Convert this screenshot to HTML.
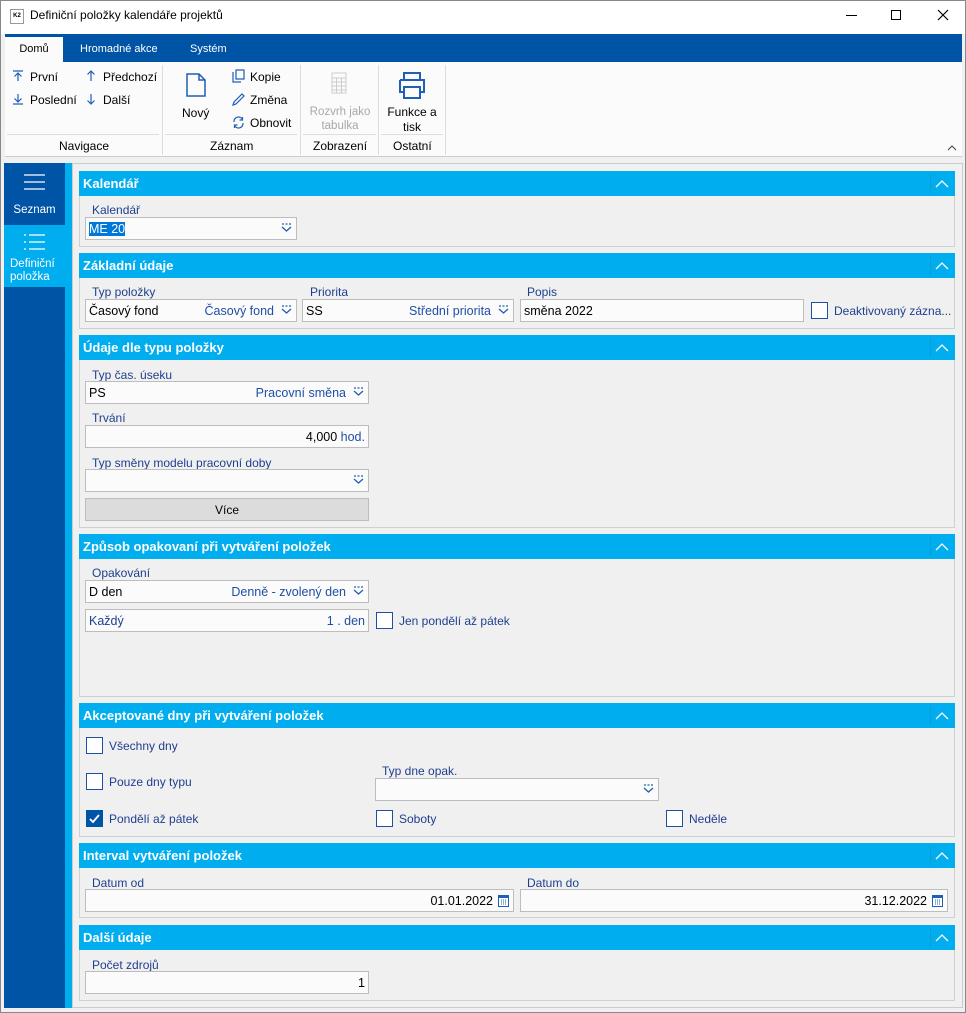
<!DOCTYPE html>
<html><head><meta charset="utf-8"><style>
*{box-sizing:border-box;margin:0;padding:0}
body{width:966px;height:1013px;position:relative;overflow:hidden;background:#f0f0f0;font-family:"Liberation Sans",sans-serif;font-size:12px;color:#000}
.a{position:absolute}
.hdr{position:absolute;left:79px;width:876px;height:25px;background:#00adef;color:#fff;font-weight:bold;font-size:13px;line-height:26px;padding-left:4px}
.hdr .sep{position:absolute;right:24px;top:3px;width:1px;height:19px;background:#0a9ad6}
.hdr svg{position:absolute;right:6px;top:8px}
.body{position:absolute;left:79px;width:876px;border:1px solid #d0d0d0;border-top:none;background:#f0f0f0}
.lbl{position:absolute;color:#1e3f8f;font-size:12px}
.inp{position:absolute;height:23px;background:#fbfbfb;border:1px solid #bdbdbd;line-height:22px;padding:0 3px;font-size:12.5px}
.r{text-align:right}
.blue{color:#1f4fa5}
.dd{position:absolute;right:4px;top:5px}
.cb{position:absolute;width:17px;height:17px;border:1px solid #1f4fa5;background:#fff}
.cbl{position:absolute;color:#1e3f8f;font-size:12px}
</style></head><body>
<div class="a" style="left:0;top:0;width:966px;height:1013px;border:1px solid #888;background:#f0f0f0"></div>
<div class="a" style="left:1px;top:1px;width:964px;height:33px;background:#fff"></div>
<div class="a" style="left:10px;top:9px;width:14px;height:15px;border:1px solid #999;background:#fff;font-size:6px;font-weight:bold;line-height:13px;text-align:center">K2</div>
<div class="a" style="left:30px;top:8px;font-size:12px">Definiční položky kalendáře projektů</div>
<div class="a" style="left:846px;top:15px;width:11px;height:1px;background:#000"></div>
<div class="a" style="left:891px;top:10px;width:10px;height:10px;border:1px solid #000"></div>
<svg class="a" style="left:937px;top:9px" width="12" height="12"><path d="M1 1L11 11M11 1L1 11" stroke="#000" stroke-width="1.2"/></svg>
<div class="a" style="left:5px;top:34px;width:957px;height:28px;background:#0054a6"></div>
<div class="a" style="left:5px;top:37px;width:58px;height:25px;background:#fbfbfb;font-size:11px;line-height:25px;text-align:center">Domů</div>
<div class="a" style="left:80px;top:43px;color:#fff;font-size:11px">Hromadné akce</div>
<div class="a" style="left:190px;top:43px;color:#fff;font-size:11px">Systém</div>
<div class="a" style="left:5px;top:62px;width:957px;height:95px;background:#fbfbfb;border-bottom:1px solid #ccc"></div>
<div class="a" style="left:7px;top:134px;width:152px;height:1px;background:#ddd"></div>
<div class="a" style="left:165px;top:134px;width:132px;height:1px;background:#ddd"></div>
<div class="a" style="left:303px;top:134px;width:73px;height:1px;background:#ddd"></div>
<div class="a" style="left:381px;top:134px;width:62px;height:1px;background:#ddd"></div>
<div class="a" style="left:162px;top:65px;width:1px;height:90px;background:#ddd"></div>
<div class="a" style="left:300px;top:65px;width:1px;height:90px;background:#ddd"></div>
<div class="a" style="left:378px;top:65px;width:1px;height:90px;background:#ddd"></div>
<div class="a" style="left:445px;top:65px;width:1px;height:90px;background:#ddd"></div>
<svg class="a" style="left:12px;top:70px" width="12" height="12"><path d="M1 1H11M6 3V11M2.5 6.5L6 3L9.5 6.5" stroke="#1f5fb5" fill="none" stroke-width="1.2"/></svg>
<div class="a" style="left:30px;top:70px;font-size:12px">První</div>
<svg class="a" style="left:12px;top:93px" width="12" height="12"><path d="M1 11H11M6 1V9M2.5 5.5L6 9L9.5 5.5" stroke="#1f5fb5" fill="none" stroke-width="1.2"/></svg>
<div class="a" style="left:30px;top:93px;font-size:12px">Poslední</div>
<svg class="a" style="left:85px;top:70px" width="12" height="12"><path d="M6 1V11M2.5 4.5L6 1L9.5 4.5" stroke="#1f5fb5" fill="none" stroke-width="1.2"/></svg>
<div class="a" style="left:103px;top:70px;font-size:12px">Předchozí</div>
<svg class="a" style="left:85px;top:93px" width="12" height="12"><path d="M6 1V11M2.5 7.5L6 11L9.5 7.5" stroke="#1f5fb5" fill="none" stroke-width="1.2"/></svg>
<div class="a" style="left:103px;top:93px;font-size:12px">Další</div>
<div class="a" style="left:59px;top:139px;font-size:12px">Navigace</div>
<svg class="a" style="left:186px;top:73px" width="20" height="24"><path d="M1 1H13L19 7V23H1Z M13 1V7H19" stroke="#1f5fb5" fill="none" stroke-width="1.5"/></svg>
<div class="a" style="left:182px;top:106px;font-size:12px">Nový</div>
<svg class="a" style="left:232px;top:69px" width="13" height="14"><path d="M1 3V13H9M4 1H12V10H4Z" stroke="#1f5fb5" fill="none" stroke-width="1.2"/></svg>
<div class="a" style="left:250px;top:70px;font-size:12px">Kopie</div>
<svg class="a" style="left:232px;top:93px" width="13" height="13"><path d="M1 12L2 9L10 1L12 3L4 11Z" stroke="#1f5fb5" fill="none" stroke-width="1.2"/></svg>
<div class="a" style="left:250px;top:93px;font-size:12px">Změna</div>
<svg class="a" style="left:232px;top:116px" width="13" height="13"><path d="M2 6A4.5 4.5 0 0 1 10.5 3.5M11 7A4.5 4.5 0 0 1 2.5 9.5M10.5 1V4H7.5M2.5 12V9H5.5" stroke="#1f5fb5" fill="none" stroke-width="1.2"/></svg>
<div class="a" style="left:250px;top:116px;font-size:12px">Obnovit</div>
<div class="a" style="left:210px;top:139px;font-size:12px">Záznam</div>
<svg class="a" style="left:331px;top:72px" width="16" height="22"><rect x="1" y="1" width="14" height="20" fill="none" stroke="#ccc"/><path d="M1 6H15M1 10H15M1 14H15M1 18H15M5.5 6V21M10.5 6V21" stroke="#ccc"/></svg>
<div class="a" style="left:309px;top:105px;font-size:11.5px;color:#a8a8a8;text-align:center;width:62px;line-height:14px">Rozvrh jako tabulka</div>
<div class="a" style="left:313px;top:139px;font-size:12px">Zobrazení</div>
<svg class="a" style="left:397px;top:71px" width="30" height="28"><path d="M7 9V2H23V9M3 9H27V21H23M7 21H3V9M7 16H23V27H7Z" stroke="#1f5fb5" fill="none" stroke-width="2"/></svg>
<div class="a" style="left:385px;top:105px;font-size:12px;text-align:center;width:54px;line-height:15px">Funkce a tisk</div>
<div class="a" style="left:393px;top:139px;font-size:12px">Ostatní</div>
<svg class="a" style="left:947px;top:144px" width="10" height="7"><path d="M1 6L5 2L9 6" stroke="#444" fill="none"/></svg>
<div class="a" style="left:4px;top:163px;width:61px;height:845px;background:#0054a6"></div>
<div class="a" style="left:65px;top:163px;width:7px;height:845px;background:#00adef"></div>
<div class="a" style="left:72px;top:163px;width:891px;height:845px;border:1px solid #ccc;background:#f0f0f0"></div>
<svg class="a" style="left:24px;top:174px" width="21" height="16"><path d="M0 1H21M0 8H21M0 15H21" stroke="#fff" stroke-width="1.3"/></svg>
<div class="a" style="left:4px;top:204px;width:61px;text-align:center;color:#fff;font-size:11.5px">Seznam</div>
<div class="a" style="left:4px;top:225px;width:61px;height:62px;background:#00adef"></div>
<svg class="a" style="left:24px;top:234px" width="21" height="16"><path d="M0 1H2M0 8H2M0 15H2M5 1H21M5 8H21M5 15H21" stroke="#fff" stroke-width="1.3"/></svg>
<div class="a" style="left:10px;top:258px;color:#fff;font-size:11.5px;line-height:13px">Definiční<br>položka</div>

<div class="hdr" style="top:171px">Kalendář<div class="sep"></div><svg width="14" height="9"><path d="M1 8L7 2L13 8" stroke="#fff" fill="none" stroke-width="1.3"/></svg></div>
<div class="body" style="top:196px;height:51px"></div>
<div class="lbl" style="left:92px;top:203px">Kalendář</div>
<div class="inp" style="left:85px;top:217px;width:212px"><span style="background:#0078d7;color:#fff">ME 20</span><svg class="dd" width="11" height="10"><path d="M1 1h2M4.5 1h2M8 1h2M1 4L5.5 8L10 4" stroke="#1f5fb5" fill="none" stroke-width="1.3"/></svg></div>

<div class="hdr" style="top:253px">Základní údaje<div class="sep"></div><svg width="14" height="9"><path d="M1 8L7 2L13 8" stroke="#fff" fill="none" stroke-width="1.3"/></svg></div>
<div class="body" style="top:278px;height:51px"></div>
<div class="lbl" style="left:92px;top:285px">Typ položky</div>
<div class="inp" style="left:85px;top:299px;width:212px">Časový fond<span class="blue" style="position:absolute;right:22px">Časový fond</span><svg class="dd" width="11" height="10"><path d="M1 1h2M4.5 1h2M8 1h2M1 4L5.5 8L10 4" stroke="#1f5fb5" fill="none" stroke-width="1.3"/></svg></div>
<div class="lbl" style="left:310px;top:285px">Priorita</div>
<div class="inp" style="left:302px;top:299px;width:212px">SS<span class="blue" style="position:absolute;right:22px">Střední priorita</span><svg class="dd" width="11" height="10"><path d="M1 1h2M4.5 1h2M8 1h2M1 4L5.5 8L10 4" stroke="#1f5fb5" fill="none" stroke-width="1.3"/></svg></div>
<div class="lbl" style="left:527px;top:285px">Popis</div>
<div class="inp" style="left:520px;top:299px;width:284px">směna 2022</div>
<div class="cb" style="left:811px;top:302px"></div>
<div class="cbl" style="left:834px;top:304px">Deaktivovaný zázna...</div>

<div class="hdr" style="top:335px">Údaje dle typu položky<div class="sep"></div><svg width="14" height="9"><path d="M1 8L7 2L13 8" stroke="#fff" fill="none" stroke-width="1.3"/></svg></div>
<div class="body" style="top:360px;height:168px"></div>
<div class="lbl" style="left:92px;top:368px">Typ čas. úseku</div>
<div class="inp" style="left:85px;top:381px;width:284px">PS<span class="blue" style="position:absolute;right:22px">Pracovní směna</span><svg class="dd" width="11" height="10"><path d="M1 1h2M4.5 1h2M8 1h2M1 4L5.5 8L10 4" stroke="#1f5fb5" fill="none" stroke-width="1.3"/></svg></div>
<div class="lbl" style="left:92px;top:411px">Trvání</div>
<div class="inp r" style="left:85px;top:425px;width:284px">4,000 <span class="blue">hod.</span></div>
<div class="lbl" style="left:92px;top:456px">Typ směny modelu pracovní doby</div>
<div class="inp" style="left:85px;top:469px;width:284px"><svg class="dd" width="11" height="10"><path d="M1 1h2M4.5 1h2M8 1h2M1 4L5.5 8L10 4" stroke="#1f5fb5" fill="none" stroke-width="1.3"/></svg></div>
<div class="a" style="left:85px;top:498px;width:284px;height:23px;background:#dcdcdc;border:1px solid #bdbdbd;text-align:center;line-height:22px">Více</div>

<div class="hdr" style="top:534px">Způsob opakovaní při vytváření položek<div class="sep"></div><svg width="14" height="9"><path d="M1 8L7 2L13 8" stroke="#fff" fill="none" stroke-width="1.3"/></svg></div>
<div class="body" style="top:559px;height:138px"></div>
<div class="lbl" style="left:92px;top:566px">Opakování</div>
<div class="inp" style="left:85px;top:580px;width:284px">D den<span class="blue" style="position:absolute;right:22px">Denně - zvolený den</span><svg class="dd" width="11" height="10"><path d="M1 1h2M4.5 1h2M8 1h2M1 4L5.5 8L10 4" stroke="#1f5fb5" fill="none" stroke-width="1.3"/></svg></div>
<div class="inp" style="left:85px;top:609px;width:284px;color:#1e3f8f">Každý<span class="blue" style="position:absolute;right:3px">1 . den</span></div>
<div class="cb" style="left:376px;top:612px"></div>
<div class="cbl" style="left:399px;top:614px">Jen pondělí až pátek</div>

<div class="hdr" style="top:703px">Akceptované dny při vytváření položek<div class="sep"></div><svg width="14" height="9"><path d="M1 8L7 2L13 8" stroke="#fff" fill="none" stroke-width="1.3"/></svg></div>
<div class="body" style="top:728px;height:109px"></div>
<div class="cb" style="left:86px;top:737px"></div>
<div class="cbl" style="left:109px;top:739px">Všechny dny</div>
<div class="cb" style="left:86px;top:773px"></div>
<div class="cbl" style="left:109px;top:775px">Pouze dny typu</div>
<div class="lbl" style="left:382px;top:764px">Typ dne opak.</div>
<div class="inp" style="left:375px;top:778px;width:284px"><svg class="dd" width="11" height="10"><path d="M1 1h2M4.5 1h2M8 1h2M1 4L5.5 8L10 4" stroke="#1f5fb5" fill="none" stroke-width="1.3"/></svg></div>
<div class="cb" style="left:86px;top:810px;background:#0054a6;border-color:#0054a6"><svg width="15" height="15" style="position:absolute;left:0;top:0"><path d="M3 8L6 11L12 4" stroke="#fff" fill="none" stroke-width="1.8"/></svg></div>
<div class="cbl" style="left:109px;top:812px">Pondělí až pátek</div>
<div class="cb" style="left:376px;top:810px"></div>
<div class="cbl" style="left:399px;top:812px">Soboty</div>
<div class="cb" style="left:666px;top:810px"></div>
<div class="cbl" style="left:689px;top:812px">Neděle</div>

<div class="hdr" style="top:843px">Interval vytváření položek<div class="sep"></div><svg width="14" height="9"><path d="M1 8L7 2L13 8" stroke="#fff" fill="none" stroke-width="1.3"/></svg></div>
<div class="body" style="top:868px;height:50px"></div>
<div class="lbl" style="left:92px;top:876px">Datum od</div>
<div class="inp r" style="left:85px;top:889px;width:429px;padding-right:20px">01.01.2022<svg class="a" style="right:4px;top:5px" width="11" height="12"><rect x="0.5" y="0.5" width="10" height="11" fill="#fff" stroke="#1f5fb5"/><rect x="0.5" y="0.5" width="10" height="2.5" fill="#1f5fb5"/><path d="M3 5h1M5 5h1M7 5h1M3 7h1M5 7h1M7 7h1M3 9h1M5 9h1M7 9h1" stroke="#1f5fb5"/></svg></div>
<div class="lbl" style="left:527px;top:876px">Datum do</div>
<div class="inp r" style="left:520px;top:889px;width:428px;padding-right:20px">31.12.2022<svg class="a" style="right:4px;top:5px" width="11" height="12"><rect x="0.5" y="0.5" width="10" height="11" fill="#fff" stroke="#1f5fb5"/><rect x="0.5" y="0.5" width="10" height="2.5" fill="#1f5fb5"/><path d="M3 5h1M5 5h1M7 5h1M3 7h1M5 7h1M7 7h1M3 9h1M5 9h1M7 9h1" stroke="#1f5fb5"/></svg></div>

<div class="hdr" style="top:925px">Další údaje<div class="sep"></div><svg width="14" height="9"><path d="M1 8L7 2L13 8" stroke="#fff" fill="none" stroke-width="1.3"/></svg></div>
<div class="body" style="top:950px;height:51px"></div>
<div class="lbl" style="left:92px;top:958px">Počet zdrojů</div>
<div class="inp r" style="left:85px;top:971px;width:284px">1</div>
</body></html>
